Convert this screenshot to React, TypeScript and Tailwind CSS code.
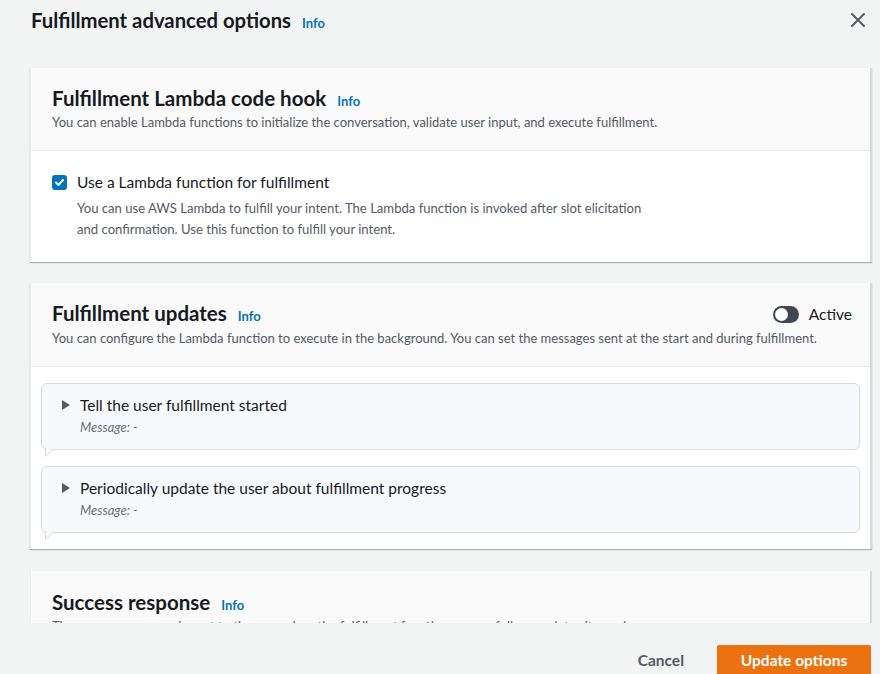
import React from "react";

function Info() {
  return <span className="ml-[11px] text-[13px] font-bold text-[#0073bb]">Info</span>;
}

function Tail() {
  return (
    <svg className="absolute left-[3px] bottom-[-8px]" width="12" height="9" viewBox="0 0 12 9">
      <path d="M0.5 0 L0.5 8.5 L9 0" fill="#f7fafd" stroke="#d5dbdb" strokeWidth="1" />
      <path d="M1 0 L9.5 0" stroke="#f7fafd" strokeWidth="2" />
    </svg>
  );
}

function Accordion({ title }: { title: string }) {
  return (
    <div className="relative h-[67px] rounded-[6px] border border-[#d5dbdb] bg-[#f7fafd] pl-[19px] pt-[11px]">
      <div className="flex items-center h-[20px]">
        <svg width="10" height="12" viewBox="0 0 10 12" className="mr-[9px]">
          <path d="M1 1 L9 6 L1 11 Z" fill="#545b64" />
        </svg>
        <span className="text-[15.5px] leading-[20px] text-[#16191f]">{title}</span>
      </div>
      <div className="pl-[19px] mt-[4px] text-[13px] leading-[16px] italic text-[#687078]">Message: -</div>
      <Tail />
    </div>
  );
}

export default function App() {
  return (
    <div className="w-[880px] h-[674px] bg-[#f2f3f3] flex flex-col overflow-hidden font-['Lato',sans-serif] text-[#16191f]">
      <div className="h-[68px] shrink-0 flex items-start pt-[8px] pl-[31px] pr-[14px]">
        <div className="flex items-baseline flex-1">
          <span className="text-[20.3px] leading-[24px] font-bold">Fulfillment advanced options</span>
          <Info />
        </div>
        <svg width="16" height="16" viewBox="0 0 16 16" className="mt-[4px]">
          <path d="M2 2 L14 14 M14 2 L2 14" stroke="#545b64" strokeWidth="2" strokeLinecap="round" />
        </svg>
      </div>

      <div className="h-[555px] shrink-0 overflow-hidden pl-[30px] pr-[8px] flex flex-col gap-[21px]">
        <div className="shrink-0 bg-white border-l border-[#eaeded] border-r-2 border-r-[#d5dbdb] shadow-[0_1px_1px_0_rgba(0,28,36,0.3)]">
          <div className="h-[83px] bg-[#fafafa] border-b border-[#eaeded] pl-[21px] pt-[18px]">
            <div className="flex items-baseline h-[24px]">
              <span className="text-[20.5px] leading-[24px] font-bold">Fulfillment Lambda code hook</span>
              <Info />
            </div>
            <div className="text-[13px] leading-[18px] text-[#545b64] mt-[3px]">You can enable Lambda functions to initialize the conversation, validate user input, and execute fulfillment.</div>
          </div>
          <div className="h-[111px] pl-[21px] pt-[21px]">
            <div className="flex items-center h-[20px]">
              <div className="w-[15px] h-[15px] rounded-[3px] bg-[#0073bb] flex items-center justify-center mr-[10px]">
                <svg width="11" height="11" viewBox="0 0 11 11">
                  <path d="M2 5.5 L4.5 8 L9 3" fill="none" stroke="white" strokeWidth="2" strokeLinecap="round" strokeLinejoin="round" />
                </svg>
              </div>
              <span className="text-[15.5px] leading-[20px]">Use a Lambda function for fulfillment</span>
            </div>
            <div className="pl-[25px] mt-[6px] text-[13.1px] leading-[21px] text-[#545b64]">
              You can use AWS Lambda to fulfill your intent. The Lambda function is invoked after slot elicitation<br />
              and confirmation. Use this function to fulfill your intent.
            </div>
          </div>
        </div>

        <div className="shrink-0 bg-white border-l border-[#eaeded] border-r-2 border-r-[#d5dbdb] shadow-[0_1px_1px_0_rgba(0,28,36,0.3)]">
          <div className="h-[84px] bg-[#fafafa] border-b border-[#eaeded] pl-[21px] pr-[18px] pt-[19px]">
            <div className="flex items-center h-[24px]">
              <div className="flex items-baseline flex-1">
                <span className="text-[20.5px] leading-[24px] font-bold">Fulfillment updates</span>
                <Info />
              </div>
              <div className="flex items-center">
                <div className="w-[26px] h-[17px] rounded-full bg-[#414750] relative mr-[10px]">
                  <div className="absolute left-[2px] top-[2px] w-[13px] h-[13px] rounded-full bg-white" />
                </div>
                <span className="text-[15.5px] leading-[20px]">Active</span>
              </div>
            </div>
            <div className="text-[13px] leading-[18px] text-[#545b64] mt-[3px]">You can configure the Lambda function to execute in the background. You can set the messages sent at the start and during fulfillment.</div>
          </div>
          <div className="px-[10px] pt-[16px] pb-[16px] flex flex-col gap-[16px]">
            <Accordion title="Tell the user fulfillment started" />
            <Accordion title="Periodically update the user about fulfillment progress" />
          </div>
        </div>

        <div className="shrink-0 bg-white border-l border-[#eaeded] border-r-2 border-r-[#d5dbdb] mt-[1px]">
          <div className="h-[84px] bg-[#fafafa] pl-[21px] pt-[19px]">
            <div className="flex items-baseline h-[24px]">
              <span className="text-[20.5px] leading-[24px] font-bold">Success response</span>
              <Info />
            </div>
            <div className="text-[13px] leading-[18px] text-[#545b64] mt-[3px]">The success response is sent to the user when the fulfillment function successfully completes its work.</div>
          </div>
        </div>
      </div>

      <div className="h-[51px] shrink-0 flex items-start justify-end pt-[22px] pr-[9px]">
        <span className="text-[15.5px] leading-[20px] font-bold text-[#545b64] mr-[33px] mt-[5px]">Cancel</span>
        <div className="w-[154px] h-[40px] shrink-0 bg-[#ec7211] rounded-[2px] flex justify-center pt-[5px]">
          <span className="text-[15.5px] leading-[20px] font-bold text-white">Update options</span>
        </div>
      </div>
    </div>
  );
}
